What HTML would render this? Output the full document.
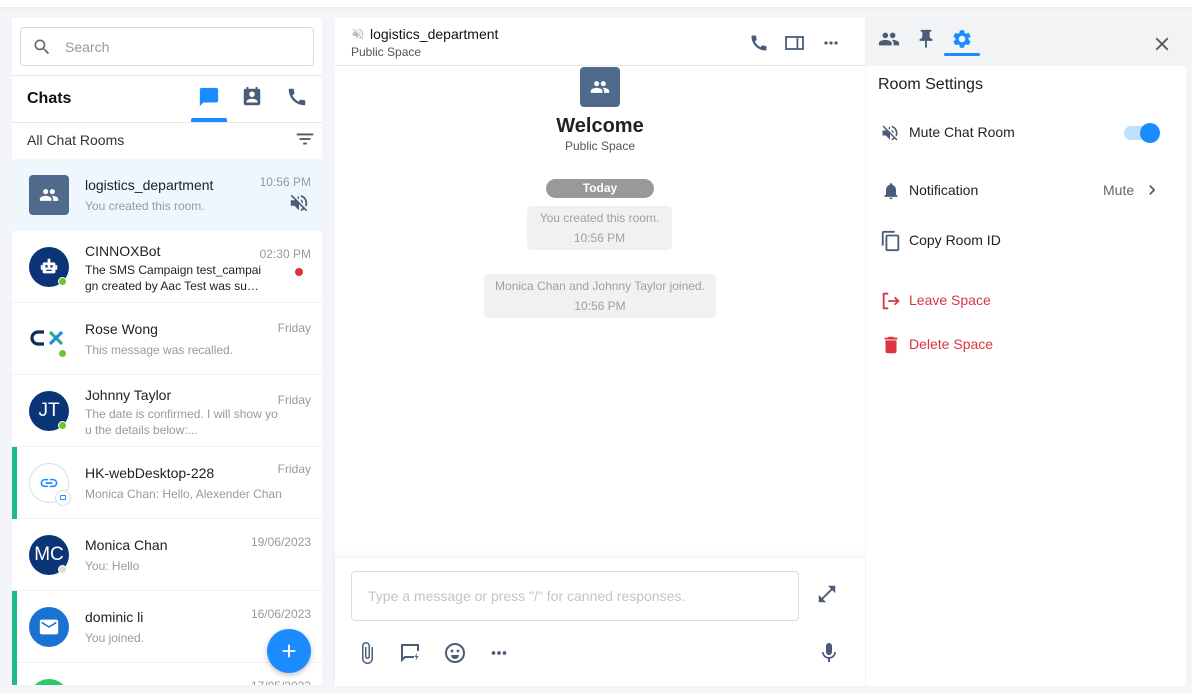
<!DOCTYPE html>
<html><head><meta charset="utf-8"><style>
*{box-sizing:border-box;margin:0;padding:0}
html{width:1192px;height:693px;overflow:hidden}
body{width:1192px;height:693px;background:#f4f5f9;font-family:"Liberation Sans",Arial,sans-serif;position:relative;overflow:hidden;color:#222}
.top{position:absolute;left:0;top:0;width:1192px;height:7px;background:#fff;box-shadow:0 1px 2px rgba(0,0,0,.06)}
.panel{position:absolute;background:#fff}
svg{display:block}
.ic{fill:#4a5d78}
.abs{position:absolute}
.item{position:absolute;left:0;width:310px;height:72px;border-bottom:1px solid #f2f3f5}
.item .av{position:absolute;left:17px;top:16px;width:40px;height:40px;border-radius:50%}
.item .nm{position:absolute;left:73px;top:18px;font-size:14px;color:#222}
.item .sb{position:absolute;left:73px;top:39px;font-size:12px;color:#999;width:200px;line-height:16px}
.item .tm{position:absolute;right:11px;top:16px;font-size:12px;color:#9a9a9a}
.dot{position:absolute;width:9px;height:9px;border-radius:50%;background:#6cc72c;border:1.5px solid #fff}
.bar{position:absolute;left:0;top:0;width:5px;height:72px;background:#21b88e}
.ini{color:#fff;font-size:19px;text-align:center;line-height:40px;background:#0c3577}
.sys{position:absolute;background:#f1f1f1;border-radius:4px;color:#a0a0a0;font-size:12px;text-align:center;line-height:20px;padding:2px 0}
.row{position:absolute;left:14px;font-size:14px;color:#222}
</style></head><body>
<div class="top"></div>

<!-- LEFT PANEL -->
<div class="panel" style="left:12px;top:18px;width:310px;height:668px;overflow:hidden">
  <div class="abs" style="left:8px;top:9px;width:294px;height:39px;border:1px solid #d9d9d9;border-radius:4px">
    <svg class="abs" style="left:11px;top:9px" width="20" height="20" viewBox="0 0 24 24"><path fill="#666" d="M15.5 14h-.79l-.28-.27A6.47 6.47 0 0 0 16 9.5 6.5 6.5 0 1 0 9.5 16c1.61 0 3.09-.59 4.23-1.57l.27.28v.79l5 4.99L20.49 19l-4.99-5zm-6 0C7.01 14 5 11.99 5 9.5S7.01 5 9.5 5 14 7.01 14 9.5 11.99 14 9.5 14z"/></svg>
    <div class="abs" style="left:44px;top:11px;font-size:14px;color:#999">Search</div>
  </div>
  <div class="abs" style="left:0;top:57px;width:310px;border-top:1px solid #e8e8e8"></div>
  <div class="abs" style="left:15px;top:72px;font-size:16px;font-weight:bold;color:#111">Chats</div>
  <svg class="abs" style="left:186px;top:68px" width="22" height="22" viewBox="0 0 24 24"><path fill="#1a8cff" d="M20 2H4c-1.1 0-2 .9-2 2v18l4-4h14c1.1 0 2-.9 2-2V4c0-1.1-.9-2-2-2z"/></svg>
  <div class="abs" style="left:179px;top:100px;width:36px;height:4px;border-radius:2px 2px 0 0;background:#1a8cff"></div>
  <svg class="abs" style="left:229px;top:68px" width="22" height="22" viewBox="0 0 24 24"><path class="ic" d="M19 3h-1V1h-2v2H8V1H6v2H5c-1.11 0-2 .9-2 2v14c0 1.1.89 2 2 2h14c1.1 0 2-.9 2-2V5c0-1.1-.9-2-2-2zm-7 3c1.66 0 3 1.34 3 3s-1.34 3-3 3-3-1.34-3-3 1.34-3 3-3zm6 12H6v-1c0-2 4-3.1 6-3.1s6 1.1 6 3.1v1z"/></svg>
  <svg class="abs" style="left:274px;top:68px" width="22" height="22" viewBox="0 0 24 24"><path class="ic" d="M20.01 15.38c-1.23 0-2.42-.2-3.53-.56a.977.977 0 0 0-1.01.24l-1.57 1.97c-2.83-1.35-5.48-3.9-6.89-6.83l1.95-1.66c.27-.28.35-.67.24-1.02-.37-1.11-.56-2.3-.56-3.53 0-.54-.45-.99-.99-.99H4.19C3.65 3 3 3.24 3 3.99 3 13.28 10.73 21 20.01 21c.71 0 .99-.63.99-1.18v-3.45c0-.54-.45-.99-.99-.99z"/></svg>
  <div class="abs" style="left:0;top:104px;width:310px;border-top:1px solid #e8e8e8"></div>
  <div class="abs" style="left:15px;top:114px;font-size:14px;color:#333">All Chat Rooms</div>
  <svg class="abs" style="left:282px;top:110px" width="22" height="22" viewBox="0 0 24 24"><path fill="#555" d="M10 18h4v-2h-4v2zM3 6v2h18V6H3zm3 7h12v-2H6v2z"/></svg>

  <div class="item" style="top:141px;background:#eef6fe;border:none">
    <div class="av" style="border-radius:4px;background:#4f6a8c"><svg style="margin:10px" width="20" height="20" viewBox="0 0 24 24"><path fill="#fff" d="M16 11c1.66 0 2.99-1.34 2.99-3S17.66 5 16 5c-1.66 0-3 1.34-3 3s1.34 3 3 3zm-8 0c1.66 0 2.99-1.34 2.99-3S9.66 5 8 5C6.34 5 5 6.34 5 8s1.34 3 3 3zm0 2c-2.33 0-7 1.17-7 3.5V19h14v-2.5c0-2.33-4.67-3.5-7-3.5zm8 0c-.29 0-.62.02-.97.05 1.16.84 1.97 1.97 1.97 3.45V19h6v-2.5c0-2.33-4.67-3.5-7-3.5z"/></svg></div>
    <div class="nm">logistics_department</div><div class="sb">You created this room.</div><div class="tm">10:56 PM</div>
    <svg class="abs" style="left:276px;top:33px" width="22" height="22" viewBox="0 0 24 24"><path class="ic" d="M16.5 12c0-1.77-1.02-3.29-2.5-4.03v2.21l2.45 2.45c.03-.2.05-.41.05-.63zm2.5 0c0 .94-.2 1.82-.54 2.64l1.51 1.51C20.630 14.91 21 13.5 21 12c0-4.28-2.99-7.86-7-8.77v2.06c2.89.86 5 3.54 5 6.71zM4.27 3L3 4.27 7.73 9H3v6h4l5 5v-6.73l4.25 4.25c-.67.52-1.42.93-2.25 1.18v2.06c1.38-.31 2.63-.95 3.69-1.81L19.73 21 21 19.73l-9-9L4.27 3zM12 4L9.91 6.09 12 8.18V4z"/></svg>
  </div>

  <div class="item" style="top:213px">
    <div class="av" style="background:#0c3577"><svg style="margin:9px" width="22" height="22" viewBox="0 0 24 24"><rect x="5" y="7" width="14" height="12" rx="2" fill="#fff"/><rect x="10.5" y="3" width="3" height="4" fill="#fff"/><rect x="3" y="10" width="2" height="5" fill="#fff"/><rect x="19" y="10" width="2" height="5" fill="#fff"/><rect x="8" y="10" width="2.5" height="2.5" fill="#0c3577"/><rect x="13.5" y="10" width="2.5" height="2.5" fill="#0c3577"/><rect x="9" y="15" width="6" height="1.3" fill="#0c3577"/></svg></div>
    <div class="dot" style="left:46px;top:46px"></div>
    <div class="nm" style="top:12px">CINNOXBot</div>
    <div class="sb" style="top:31px;color:#222;width:180px">The SMS Campaign test_campai gn created by Aac Test was su…</div>
    <div class="tm">02:30 PM</div>
    <div class="abs" style="left:283px;top:37px;width:8px;height:8px;border-radius:50%;background:#e0303e"></div>
  </div>

  <div class="item" style="top:285px">
    <div class="av" style="background:#fff"><svg width="40" height="40" viewBox="0 0 40 40"><path d="M15 13h-6a6 6 0 0 0 0 12h6" stroke="#0c2d5c" stroke-width="3.2" fill="none"/><path d="M21 13l12 12" stroke="#2ab07a" stroke-width="3.2"/><path d="M33 13l-12 12" stroke="#1e8fe0" stroke-width="3.2"/></svg></div>
    <div class="dot" style="left:46px;top:46px"></div>
    <div class="nm">Rose Wong</div><div class="sb">This message was recalled.</div><div class="tm" style="top:18px">Friday</div>
  </div>

  <div class="item" style="top:357px">
    <div class="av ini">JT</div>
    <div class="dot" style="left:46px;top:46px"></div>
    <div class="nm" style="top:12px">Johnny Taylor</div>
    <div class="sb" style="top:31px;width:196px">The date is confirmed. I will show yo u the details below:...</div>
    <div class="tm" style="top:18px">Friday</div>
  </div>

  <div class="item" style="top:429px">
    <div class="bar"></div>
    <div class="av" style="background:#fff;border:1px solid #cfe0e6"><svg style="margin:9px" width="20" height="20" viewBox="0 0 24 24"><path fill="#1a8cff" d="M3.9 12c0-1.71 1.39-3.1 3.1-3.1h4V7H7c-2.76 0-5 2.24-5 5s2.24 5 5 5h4v-1.9H7c-1.71 0-3.1-1.39-3.1-3.1zM8 13h8v-2H8v2zm9-6h-4v1.9h4c1.71 0 3.1 1.39 3.1 3.1s-1.39 3.1-3.1 3.1h-4V17h4c2.76 0 5-2.24 5-5s-2.24-5-5-5z"/></svg></div>
    <div class="abs" style="left:43px;top:43px;width:16px;height:16px;border-radius:50%;background:#fff;border:1px solid #ddd"><div style="margin:4px 0 0 4px;width:6px;height:5px;border:1px solid #1a8cff;border-radius:1px"></div></div>
    <div class="nm">HK-webDesktop-228</div><div class="sb" style="width:230px">Monica Chan: Hello, Alexender Chan</div><div class="tm" style="top:15px">Friday</div>
  </div>

  <div class="item" style="top:501px">
    <div class="av ini">MC</div>
    <div class="dot" style="left:46px;top:46px;background:#ddd"></div>
    <div class="nm">Monica Chan</div><div class="sb">You: Hello</div><div class="tm">19/06/2023</div>
  </div>

  <div class="item" style="top:573px">
    <div class="bar"></div>
    <div class="av" style="background:#1a73d2"><svg style="margin:9px" width="22" height="22" viewBox="0 0 24 24"><path fill="#fff" d="M20 4H4c-1.1 0-1.99.9-1.99 2L2 18c0 1.1.9 2 2 2h16c1.1 0 2-.9 2-2V6c0-1.1-.9-2-2-2zm0 4l-8 5-8-5V6l8 5 8-5v2z"/></svg></div>
    <div class="nm">dominic li</div><div class="sb">You joined.</div><div class="tm">16/06/2023</div>
  </div>

  <div class="item" style="top:645px;height:23px;overflow:hidden">
    <div class="bar"></div>
    <div class="av" style="background:#2dc76d"></div>
    <div class="tm">17/05/2023</div>
  </div>

  <div class="abs" style="left:255px;top:611px;width:44px;height:44px;border-radius:50%;background:#1a8cff;box-shadow:0 2px 6px rgba(0,0,0,.25)">
    <svg style="margin:11px" width="22" height="22" viewBox="0 0 24 24"><path fill="#fff" d="M19 13h-6v6h-2v-6H5v-2h6V5h2v6h6v2z"/></svg>
  </div>
</div>

<!-- MIDDLE PANEL -->
<div class="panel" style="left:335px;top:18px;width:530px;height:668px">
  <div class="abs" style="left:0;top:0;width:530px;height:48px;border-bottom:1px solid #e6e6e6"></div>
  <svg class="abs" style="left:16px;top:9px" width="14" height="14" viewBox="0 0 24 24"><path fill="#bbb" d="M16.5 12c0-1.77-1.02-3.29-2.5-4.03v2.21l2.45 2.45c.03-.2.05-.41.05-.63zm2.5 0c0 .94-.2 1.82-.54 2.64l1.51 1.51C20.63 14.91 21 13.5 21 12c0-4.28-2.99-7.86-7-8.77v2.06c2.89.86 5 3.54 5 6.71zM4.27 3L3 4.27 7.73 9H3v6h4l5 5v-6.73l4.25 4.25c-.67.52-1.42.93-2.25 1.18v2.06c1.38-.31 2.63-.95 3.69-1.81L19.73 21 21 19.73l-9-9L4.27 3zM12 4L9.91 6.09 12 8.18V4z"/></svg>
  <div class="abs" style="left:35px;top:8px;font-size:14px;color:#111">logistics_department</div>
  <div class="abs" style="left:16px;top:27px;font-size:12px;color:#555">Public Space</div>
  <svg class="abs" style="left:414px;top:15px" width="20" height="20" viewBox="0 0 24 24"><path class="ic" d="M20.01 15.38c-1.23 0-2.42-.2-3.53-.56a.977.977 0 0 0-1.01.24l-1.57 1.97c-2.83-1.35-5.48-3.9-6.89-6.83l1.95-1.66c.27-.28.35-.67.24-1.02-.37-1.11-.56-2.3-.56-3.53 0-.54-.45-.99-.99-.99H4.19C3.65 3 3 3.24 3 3.99 3 13.28 10.73 21 20.01 21c.71 0 .99-.63.99-1.18v-3.45c0-.54-.45-.99-.99-.99z"/></svg>
  <svg class="abs" style="left:450px;top:16px" width="20" height="18" viewBox="0 0 20 18"><rect x="1" y="3" width="17" height="12" fill="none" stroke="#4a5d78" stroke-width="1.8"/><rect x="11.5" y="3" width="1.8" height="12" fill="#4a5d78"/></svg>
  <svg class="abs" style="left:486px;top:15px" width="20" height="20" viewBox="0 0 24 24"><circle cx="6" cy="12" r="2" fill="#4a5d78"/><circle cx="12" cy="12" r="2" fill="#4a5d78"/><circle cx="18" cy="12" r="2" fill="#4a5d78"/></svg>

  <div class="abs" style="left:245px;top:49px;width:40px;height:40px;border-radius:4px;background:#4f6a8c"><svg style="margin:10px" width="20" height="20" viewBox="0 0 24 24"><path fill="#fff" d="M16 11c1.66 0 2.99-1.34 2.99-3S17.66 5 16 5c-1.66 0-3 1.34-3 3s1.34 3 3 3zm-8 0c1.66 0 2.99-1.34 2.99-3S9.66 5 8 5C6.34 5 5 6.34 5 8s1.34 3 3 3zm0 2c-2.33 0-7 1.17-7 3.5V19h14v-2.5c0-2.33-4.67-3.5-7-3.5zm8 0c-.29 0-.62.02-.97.05 1.16.84 1.97 1.97 1.97 3.45V19h6v-2.5c0-2.33-4.67-3.5-7-3.5z"/></svg></div>
  <div class="abs" style="left:0;width:530px;top:97px;text-align:center;font-size:20px;font-weight:bold;color:#222">Welcome</div>
  <div class="abs" style="left:0;width:530px;top:121px;text-align:center;font-size:12px;color:#555">Public Space</div>
  <div class="abs" style="left:211px;top:161px;width:108px;height:19px;border-radius:10px;background:#999;color:#fff;font-size:12px;font-weight:bold;text-align:center;line-height:19px">Today</div>
  <div class="sys" style="left:192px;top:188px;width:145px">You created this room.<br>10:56 PM</div>
  <div class="sys" style="left:149px;top:256px;width:232px">Monica Chan and Johnny Taylor joined.<br>10:56 PM</div>

  <div class="abs" style="left:0;top:540px;width:530px;height:128px;box-shadow:0 -3px 6px rgba(0,0,0,.05);background:#fff">
    <div class="abs" style="left:16px;top:13px;width:448px;height:50px;border:1px solid #dcdcdc;border-radius:4px">
      <div class="abs" style="left:16px;top:16px;font-size:14px;color:#c4c4c4">Type a message or press "/" for canned responses.</div>
    </div>
    <svg class="abs" style="left:481px;top:25px" width="22" height="22" viewBox="0 0 24 24"><path class="ic" d="M21 11V3h-8l3.29 3.29-10 10L3 13v8h8l-3.29-3.29 10-10z"/></svg>
    <svg class="abs" style="left:20px;top:83px" width="24" height="24" viewBox="0 0 24 24"><path class="ic" d="M16.5 6v11.5c0 2.21-1.79 4-4 4s-4-1.79-4-4V5a2.5 2.5 0 0 1 5 0v10.5c0 .55-.45 1-1 1s-1-.45-1-1V6H10v9.5a2.5 2.5 0 0 0 5 0V5c0-2.21-1.79-4-4-4S7 2.79 7 5v12.5c0 3.04 2.46 5.5 5.5 5.5s5.5-2.46 5.5-5.5V6h-1.5z"/></svg>
    <svg class="abs" style="left:63px;top:83px" width="24" height="24" viewBox="0 0 24 24"><path d="M20 10V4H4v15l3-3h9" fill="none" stroke="#4a5d78" stroke-width="2"/><path d="M19 12l-2.5 4h2l-1 4 3-5h-2z" fill="#4a5d78"/></svg>
    <svg class="abs" style="left:108px;top:83px" width="24" height="24" viewBox="0 0 24 24"><circle cx="12" cy="12" r="9" fill="none" stroke="#4a5d78" stroke-width="2"/><circle cx="9" cy="10" r="1.4" fill="#4a5d78"/><circle cx="15" cy="10" r="1.4" fill="#4a5d78"/><path d="M8 14h8a4 4 0 0 1-8 0z" fill="#4a5d78"/></svg>
    <svg class="abs" style="left:153px;top:84px" width="22" height="22" viewBox="0 0 24 24"><circle cx="6" cy="12" r="2" fill="#4a5d78"/><circle cx="12" cy="12" r="2" fill="#4a5d78"/><circle cx="18" cy="12" r="2" fill="#4a5d78"/></svg>
    <svg class="abs" style="left:482px;top:83px" width="24" height="24" viewBox="0 0 24 24"><path class="ic" d="M12 14c1.66 0 2.99-1.34 2.99-3L15 5c0-1.66-1.34-3-3-3S9 3.34 9 5v6c0 1.66 1.34 3 3 3zm5.3-3c0 3-2.54 5.1-5.3 5.1S6.7 14 6.7 11H5c0 3.41 2.72 6.23 6 6.72V21h2v-3.28c3.28-.48 6-3.3 6-6.72h-1.7z"/></svg>
  </div>
</div>

<!-- RIGHT PANEL -->
<div class="panel" style="left:866px;top:18px;width:320px;height:668px">
  <div class="abs" style="left:0;top:0;width:320px;height:48px;background:#f1f3f5"></div>
  <svg class="abs" style="left:12px;top:10px" width="22" height="22" viewBox="0 0 24 24"><path class="ic" d="M16 11c1.66 0 2.99-1.34 2.99-3S17.66 5 16 5c-1.66 0-3 1.34-3 3s1.34 3 3 3zm-8 0c1.66 0 2.99-1.34 2.99-3S9.66 5 8 5C6.34 5 5 6.34 5 8s1.34 3 3 3zm0 2c-2.33 0-7 1.17-7 3.5V19h14v-2.5c0-2.33-4.67-3.5-7-3.5zm8 0c-.29 0-.62.02-.97.05 1.16.84 1.97 1.97 1.97 3.45V19h6v-2.5c0-2.33-4.67-3.5-7-3.5z"/></svg>
  <svg class="abs" style="left:49px;top:10px" width="22" height="22" viewBox="0 0 24 24"><path class="ic" d="M16 9V4h1c.55 0 1-.45 1-1s-.45-1-1-1H7c-.55 0-1 .45-1 1s.45 1 1 1h1v5c0 1.66-1.34 3-3 3v2h5.97v7l1 1 1-1v-7H19v-2c-1.66 0-3-1.34-3-3z"/></svg>
  <svg class="abs" style="left:85px;top:10px" width="22" height="22" viewBox="0 0 24 24"><path fill="#1a8cff" d="M19.14 12.94c.04-.3.06-.61.06-.94 0-.32-.02-.64-.07-.94l2.03-1.58a.49.49 0 0 0 .12-.61l-1.92-3.32a.488.488 0 0 0-.59-.22l-2.39.96c-.5-.38-1.03-.7-1.62-.94l-.36-2.54a.484.484 0 0 0-.48-.41h-3.84c-.24 0-.43.17-.47.41l-.36 2.54c-.59.24-1.13.57-1.62.94l-2.39-.96c-.22-.08-.47 0-.59.22L2.74 8.87c-.12.21-.08.47.12.61l2.03 1.58c-.05.3-.09.63-.09.94s.02.64.07.94l-2.03 1.58a.49.49 0 0 0-.12.61l1.92 3.32c.12.22.37.29.59.22l2.39-.96c.5.38 1.03.7 1.62.94l.36 2.54c.05.24.24.41.48.41h3.84c.24 0 .44-.17.47-.41l.36-2.54c.59-.24 1.13-.56 1.62-.94l2.39.96c.22.08.47 0 .59-.22l1.92-3.32c.12-.22.07-.47-.12-.61l-2.01-1.58zM12 15.6c-1.98 0-3.6-1.62-3.6-3.6s1.62-3.6 3.6-3.6 3.6 1.62 3.6 3.6-1.62 3.6-3.6 3.6z"/></svg>
  <div class="abs" style="left:78px;top:35px;width:36px;height:3px;border-radius:2px;background:#1a8cff"></div>
  <svg class="abs" style="left:285px;top:15px" width="22" height="22" viewBox="0 0 24 24"><path fill="#555" d="M19 6.41L17.59 5 12 10.59 6.41 5 5 6.41 10.59 12 5 17.59 6.41 19 12 13.41 17.59 19 19 17.59 13.41 12z"/></svg>

  <div class="abs" style="left:12px;top:58px;font-size:16px;color:#222">Room Settings</div>

  <svg class="abs" style="left:14px;top:105px" width="20" height="20" viewBox="0 0 24 24"><path class="ic" d="M16.5 12c0-1.77-1.02-3.29-2.5-4.03v2.21l2.45 2.45c.03-.2.05-.41.05-.63zm2.5 0c0 .94-.2 1.82-.54 2.64l1.51 1.51C20.63 14.91 21 13.5 21 12c0-4.28-2.99-7.86-7-8.77v2.06c2.89.86 5 3.54 5 6.71zM4.27 3L3 4.27 7.73 9H3v6h4l5 5v-6.73l4.25 4.25c-.67.52-1.42.93-2.25 1.18v2.06c1.38-.31 2.63-.95 3.69-1.81L19.73 21 21 19.73l-9-9L4.27 3zM12 4L9.91 6.09 12 8.18V4z"/></svg>
  <div class="row" style="left:43px;top:106px">Mute Chat Room</div>
  <div class="abs" style="left:258px;top:108px;width:34px;height:14px;border-radius:7px;background:#bfe0fb"></div>
  <div class="abs" style="left:274px;top:105px;width:20px;height:20px;border-radius:50%;background:#1a8cff"></div>

  <svg class="abs" style="left:15px;top:163px" width="20" height="20" viewBox="0 0 24 24"><path class="ic" d="M12 22c1.1 0 2-.9 2-2h-4c0 1.1.89 2 2 2zm6-6v-5c0-3.07-1.64-5.64-4.5-6.32V4c0-.83-.67-1.5-1.5-1.5s-1.5.67-1.5 1.5v.68C7.63 5.36 6 7.92 6 11v5l-2 2v1h16v-1l-2-2z"/></svg>
  <div class="row" style="left:43px;top:164px">Notification</div>
  <div class="abs" style="left:237px;top:164px;font-size:14px;color:#666">Mute</div>
  <svg class="abs" style="left:276px;top:162px" width="20" height="20" viewBox="0 0 24 24"><path fill="#555" d="M10 6L8.59 7.41 13.17 12l-4.58 4.59L10 18l6-6z"/></svg>

  <svg class="abs" style="left:14px;top:212px" width="22" height="22" viewBox="0 0 24 24"><path class="ic" d="M16 1H4c-1.1 0-2 .9-2 2v14h2V3h12V1zm3 4H8c-1.1 0-2 .9-2 2v14c0 1.1.9 2 2 2h11c1.1 0 2-.9 2-2V7c0-1.1-.9-2-2-2zm0 16H8V7h11v14z"/></svg>
  <div class="row" style="left:43px;top:214px">Copy Room ID</div>

  <svg class="abs" style="left:14px;top:272px" width="22" height="22" viewBox="0 0 24 24"><path d="M9 4H4v16h5" fill="none" stroke="#d93545" stroke-width="2"/><path d="M9 12h11M16 8l4 4-4 4" fill="none" stroke="#d93545" stroke-width="2"/></svg>
  <div class="row" style="left:43px;top:274px;color:#d93545">Leave Space</div>
  <svg class="abs" style="left:14px;top:316px" width="22" height="22" viewBox="0 0 24 24"><path fill="#d93545" d="M6 19c0 1.1.9 2 2 2h8c1.1 0 2-.9 2-2V7H6v12zM19 4h-3.5l-1-1h-5l-1 1H5v2h14V4z"/></svg>
  <div class="row" style="left:43px;top:318px;color:#d93545">Delete Space</div>
</div>
</body></html>
